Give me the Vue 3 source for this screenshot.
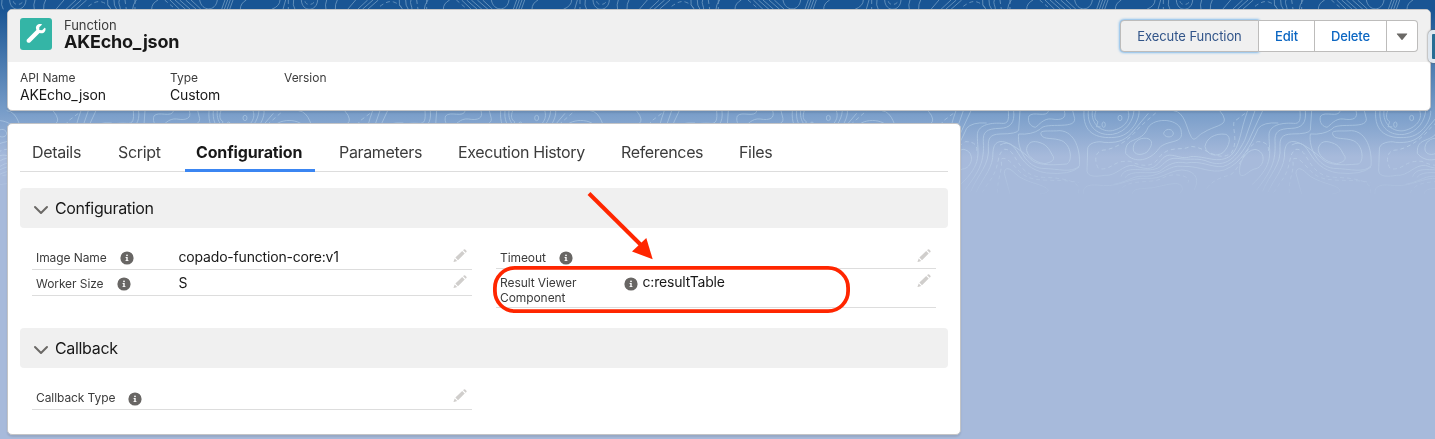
<script setup>
const tiles = [-4, -3, -2, -1, 0, 1]
const facts = [
  { label: 'API Name', value: 'AKEcho_json' },
  { label: 'Type', value: 'Custom' },
  { label: 'Version', value: '' },
]
const tabs = ['Details', 'Script', 'Configuration', 'Parameters', 'Execution History', 'References', 'Files']
const sections = [
  {
    title: 'Configuration',
    columns: [
      [
        { label: 'Image Name', value: 'copado-function-core:v1', cls: 'first' },
        { label: 'Worker Size', value: 'S', cls: 'second' },
      ],
      [
        { label: 'Timeout', value: '', cls: 'timeout' },
        { label: 'Result Viewer Component', value: 'c:resultTable', cls: 'tall' },
      ],
    ],
  },
  {
    title: 'Callback',
    columns: [[{ label: 'Callback Type', value: '', cls: 'callback' }], []],
  },
]
</script>

<template>
  <main class="page">
    <svg class="topo" viewBox="0 0 1435 439" aria-hidden="true">
      <defs>
        <linearGradient id="fade" x1="0" y1="0" x2="0" y2="1">
          <stop offset="0" stop-color="#fff" />
          <stop offset=".78" stop-color="#fff" />
          <stop offset="1" stop-color="#222" />
        </linearGradient>
        <mask id="topo-fade" maskUnits="userSpaceOnUse" x="0" y="0" width="1435" height="439">
          <rect width="1435" height="196" fill="url(#fade)" />
        </mask>
        <g id="topo-lower" fill="none">
          <path d="M205 32C207 60 205 72 185 70C145 67 112 78 112 105C112 160 130 190 60 255 M221 32C225 70 210 84 180 85C140 86 128 95 130 125C133 185 120 210 75 270 M240 32L236 90Q233 102 180 102C150 103 144 115 145 140C150 195 115 220 92 275" />
          <path d="M236 102C230 145 260 200 305 205C360 207 395 220 418 198C422 150 405 95 360 92C325 95 295 88 304 105C310 120 340 112 365 122C395 135 398 185 380 192C325 197 285 195 270 175C235 145 165 90 159 155C160 205 133 225 108 278" />
          <path d="M180 135C240 105 220 205 320 219Q390 226 418 201 M236 102Q275 105 300 88C315 62 420 95 402 48L398 32 M373 32C380 55 365 62 335 57C310 54 298 75 286 82C265 78 263 58 267 48C280 32 320 55 326 32" />
          <path d="M260 145C265 125 280 121 300 128C325 135 330 155 340 170C344 184 327 188 315 191C280 187 257 163 260 145Z" />
          <path d="M432 32C427 100 470 117 525 112C575 108 600 55 597 32 M445 32C440 85 478 108 518 103C560 96 580 60 582 32 M457 32C452 72 484 97 517 92C552 84 574 59 564 32 M468 32C462 48 464 60 474 65L469 80L482 81" />
          <ellipse cx="491" cy="74" rx="5" ry="8" /><ellipse cx="540" cy="54" rx="6" ry="8" />
          <path d="M557 160C554 105 603 135 624 83C643 50 723 55 724 97C730 133 680 118 657 145C632 182 583 193 557 160Z" />
          <path d="M580 150C577 127 597 112 620 115C642 119 637 139 620 157C601 168 584 164 580 150Z M671 100C674 86 696 83 700 99C701 114 674 115 671 100Z" />
          <path d="M700 32C735 35 739 85 753 109C763 130 773 105 790 98C822 77 856 78 853 57Q852 47 839 32 M795 140C798 116 824 98 858 103C875 111 869 137 850 157C830 172 801 166 795 140Z" />
          <path d="M492 127C476 122 440 128 443 150L441 213C443 232 471 230 494 226C530 229 547 194 581 196C628 213 641 207 663 181C690 146 715 183 752 170C795 166 836 195 873 166C900 142 901 90 923 32 M492 127C527 129 550 125 574 100L625 40" />
          <path d="M543 230C555 194 611 217 645 207C669 203 676 171 711 175C754 182 774 171 807 186C870 207 895 155 914 121L945 32 M522 253C577 241 577 225 620 229C665 227 690 193 727 199C785 198 810 222 853 210C906 188 930 140 955 85Q970 66 1015 69" />
          <path d="M555 233C575 206 623 226 659 214C685 193 706 182 739 189C785 181 811 202 848 200C887 189 917 147 934 105L968 32" />
          <path d="M900 224C892 190 917 151 945 148C983 155 972 205 943 207C924 213 913 234 900 224Z" />
          <path d="M210 282L193 220C194 200 209 203 225 220C255 250 315 252 325 270Q326 279 300 282 M430 282C427 254 452 252 490 257C545 259 572 232 619 235C665 239 686 212 725 210C765 212 781 236 762 270 M578 282C577 264 603 267 640 263C680 255 730 237 727 270L718 282" />
          <path class="dash" d="M475 205C461 180 465 150 495 150C539 143 577 108 600 80L655 32 M484 207C520 207 519 180 571 184C610 203 641 200 657 172C690 133 726 155 750 139C799 140 835 190 875 158C895 121 877 90 882 65L918 38 M415 280C427 242 370 234 310 232C225 229 233 145 193 148C165 165 185 200 144 250L125 280 M173 280C170 236 190 211 183 178C202 164 228 208 245 220C280 253 360 233 416 248 M535 280C555 234 619 252 660 238C695 214 755 225 744 248 M800 265Q820 237 870 225C900 210 910 145 952 125Q990 125 985 155" />
        </g>
        <g id="topo-upper" fill="none">
          <path d="M-2 0Q-6 15 8 28 M17 0Q16 17 25 28 M33 0C28 9 37 20 36 28 M84 0Q73 15 73 28 M149 0Q130 10 130 28 M185 0L214 28 M200 0L232 28 M214 0L246 28 M232 0L264 28 M248 0L278 28 M274 0C280 35 322 36 327 0 M350 0L340 28 M358 0L348 28 M366 0L356 28 M374 0L364 28 M414 0Q396 10 396 28 M515 0Q515 18 490 28 M532 0L524 28 M556 0Q552 15 560 28 M579 0C581 38 626 36 628 0 M655 0Q649 15 653 28 M687 0Q680 12 681 28 M748 28L778 0 M762 28L794 0 M778 28L810 0 M718 28L742 0" />
          <path class="dash" d="M169 0L202 28 M50 0L54 28 M80 0V28 M540 0V28 M590 4C592 16 613 17 619 4 M815 19Q840 0 856 6Q877 13 882 28" />
          <path d="M0 60C70 30 80 120 48 150S-20 210 20 260 M20 60C90 30 100 120 68 150S0 210 40 260 M860 45C930 50 925 130 875 165S865 220 920 265" />
        </g>
      </defs>
      <g class="contours" mask="url(#topo-fade)">
        <use v-for="t in tiles" :key="t" href="#topo-lower" :transform="`translate(${940 + t * 291.67} 100) scale(.33333)`" />
        <use v-for="t in tiles" :key="'top' + t" href="#topo-upper" :transform="`translate(${983.33 + t * 291.67} 0) scale(.33333)`" />
      </g>
    </svg>

    <header class="record">
      <div class="record-top">
        <svg class="entity" viewBox="0 0 32 32">
          <rect width="32" height="32" rx="3" fill="#34b5a6" />
          <path d="M25.4 10.2C26.2 13 23.7 15.7 20.7 15.2L19.5 15L10.3 24.2C8.3 26 5.3 23.3 7.2 21.2L16.4 12L16 10.6C15.5 7.6 18.2 5.3 21.3 6.1C22.1 6.4 22.1 6.7 21.6 7.1L19.3 9.3V12L22.1 12.2L24.7 9.8C25 9.6 25.3 9.8 25.4 10.2Z" fill="#fff" />
        </svg>
        <div class="heading">
          <span class="kind">Function</span>
          <h1><span>AKEcho_json</span></h1>
        </div>
        <div class="actions">
          <button class="execute"><span>Execute Function</span></button>
          <button class="edit"><span>Edit</span></button>
          <button class="delete"><span>Delete</span></button>
          <button class="more" aria-label="More"><svg viewBox="0 0 12 8"><path d="M1 .5H11Q11.5.5 11 1.2L6.5 6.8Q6 7.3 5.5 6.8L1 1.2Q.5.5 1 .5Z" fill="#6b6966" /></svg></button>
        </div>
      </div>
      <div class="facts">
        <div v-for="fact in facts" :key="fact.label" class="fact">
          <span class="fact-label">{{ fact.label }}</span>
          <span class="fact-value">{{ fact.value }}</span>
        </div>
      </div>
    </header>

    <section class="panel">
      <nav class="tabs">
        <a v-for="tab in tabs" :key="tab" :class="{ active: tab === 'Configuration' }"><span>{{ tab }}</span></a>
      </nav>
      <div v-for="section in sections" :key="section.title" class="group">
        <h2>
          <svg viewBox="0 0 16 10"><path d="M2 2L8 8L14 2" fill="none" stroke="#6b6966" stroke-width="2" stroke-linecap="round" stroke-linejoin="round" /></svg>
          <span>{{ section.title }}</span>
        </h2>
        <div class="columns">
          <div v-for="(column, i) in section.columns" :key="i" class="column">
            <div v-for="field in column" :key="field.label" class="field" :class="field.cls">
              <span class="label">{{ field.label }}</span>
              <svg class="info" viewBox="0 0 14 14"><circle cx="7" cy="7" r="6.6" fill="#686664" /><circle cx="7" cy="4.3" r=".9" fill="#fff" /><path d="M5.6 6H7.7V9.2H8.5V10.1H5.5V9.2H6.3V6.9H5.6Z" fill="#fff" /></svg>
              <span class="value">{{ field.value }}</span>
              <svg class="pencil" viewBox="0 0 14 14"><path d="M2.4 8.6L9.2 2.1L11.7 4.6L5 11.2Z M10.1 1.2L10.8.5Q11.5-.1 12.2.5L13.4 1.7Q14 2.3 13.4 3L12.7 3.7Z M1.7 9.4L4.2 11.9L1 13.1Q.4 13.2.6 12.5Z" fill="#d0cecc" /></svg>
            </div>
          </div>
        </div>
      </div>
    </section>

    <div class="side-control"></div>
    <svg class="annotation" viewBox="0 0 370 130">
      <rect x="6.9" y="77.9" width="353.2" height="43.2" rx="20" fill="none" stroke="#ff2600" stroke-width="3.8" />
      <path d="M101 3.5L154 56" fill="none" stroke="#ff2600" stroke-width="4" />
      <path d="M164.7 69.3L144 61.5L158.3 48Z" fill="#ff2600" />
    </svg>
  </main>
</template>

<style>
body { margin: 0; overflow: hidden; }
</style>

<style scoped>
* { box-sizing: border-box; }
.page {
  position: relative; width: 1435px; height: 439px; overflow: hidden;
  padding: 9px 0 0 7px;
  font-family: Inter, "Liberation Sans", sans-serif; color: #181818;
  background: linear-gradient(#195594 0, #195594 10px, #789dc9 112px, #a7badb 157px, #a7badb 100%);
}
.topo { position: absolute; inset: 0; width: 1435px; height: 439px; }
.contours { stroke: #d1e7f5; stroke-width: 2.8; opacity: .42; }
.dash { stroke-dasharray: 12 9; }
.record, .panel { position: relative; background: #fff; border: 1px solid #c3c4c6; border-radius: 5px; box-shadow: 0 2px 2px rgba(0, 0, 0, .1); overflow: hidden; }
.record { width: 1424px; height: 102px; }
.record-top { display: flex; height: 52px; background: #f0f0f0; padding: 8px 12px; }
.entity { width: 32px; height: 32px; flex: none; }
.heading { margin-left: 12px; flex: 1; white-space: nowrap; }
.kind { display: block; font-size: 13px; line-height: 14px; letter-spacing: -.05px; color: #3c3c3c; }
h1 { font-size: 18px; line-height: 22px; margin: -1px 0 0; font-weight: 700; letter-spacing: -.22px; }
.actions { display: flex; height: 32px; margin-top: 2px; }
button { height: 32px; padding: 0; border: 1px solid #bdbcbb; border-left: 0; background: #fff; color: #0b66c2; font: 500 13px/30px Inter, sans-serif; letter-spacing: -.17px; white-space: nowrap; }
.execute { width: 139px; border-left: 1px solid #bdbcbb; border-radius: 4px 0 0 4px; background: #f0f0f0; color: #315489; font-weight: 400; letter-spacing: -.07px; box-shadow: 0 0 3px #1b88e5; }
.edit { width: 56px; }
.delete { width: 72px; }
.more { width: 31px; border-radius: 0 4px 4px 0; }
.more svg { width: 12px; height: 8px; }
.facts { display: grid; grid-template-columns: 150px 114px 100px; padding: 8px 12px; }
.fact { display: flex; flex-direction: column; white-space: nowrap; }
.fact-label { font-size: 12px; line-height: 15px; letter-spacing: -.04px; color: #3c3c3c; }
.fact-value { font-size: 14px; line-height: 19px; letter-spacing: -.14px; }
.panel { width: 954px; height: 312px; margin-top: 12px; padding: 7px 12px; }
.tabs { display: grid; grid-template-columns: 74px 67px 130px 107px 151px 106px 57px; gap: 12px; height: 41px; border-bottom: 1px solid #ddd; }
.tabs a { height: 41px; padding-left: 12px; font-size: 16px; line-height: 42px; letter-spacing: -.34px; color: #3c3c3c; white-space: nowrap; }
.tabs .active { color: #181818; font-weight: 700; letter-spacing: -.14px; border-bottom: 3px solid #3b86f2; padding-left: 11px; }
.group h2 { display: flex; align-items: center; height: 40px; margin: 16px 0 0; padding-left: 13px; background: #f0f0f0; border-radius: 4px; font-size: 16px; font-weight: 400; letter-spacing: -.33px; }
h2 svg { width: 16px; height: 10px; margin: 3px 6px 0 0; }
.columns { display: grid; grid-template-columns: 440px 440px; gap: 24px; padding: 16px 12px 0; height: 84px; }
.field { display: flex; position: relative; height: 26px; padding-left: 4px; border-bottom: 1px solid #ddd; line-height: 26px; }
.label { font-size: 12px; letter-spacing: -.08px; line-height: 28px; color: #3c3c3c; white-space: nowrap; }
.info { width: 14px; height: 14px; flex: none; margin: 7px 0 0 13px; }
.value { position: absolute; left: 146.5px; font-size: 14px; letter-spacing: -.18px; white-space: nowrap; }
.pencil { position: absolute; left: 421px; top: 5px; width: 14px; height: 14px; }
.timeout { height: 25px; }
.tall { height: 39px; }
.tall .label { width: 111px; line-height: 15px; padding-top: 6px; white-space: normal; }
.tall .info { margin-top: 8px; }
.callback .info { margin-top: 8px; }
.side-control { position: absolute; left: 1428px; top: 30px; width: 20px; height: 33px; border: 4px solid #dfe7ef; border-radius: 5px; background: #286d94; box-shadow: 0 0 2px #555; }
.annotation { position: absolute; left: 488px; top: 190px; width: 370px; height: 130px; }
</style>
